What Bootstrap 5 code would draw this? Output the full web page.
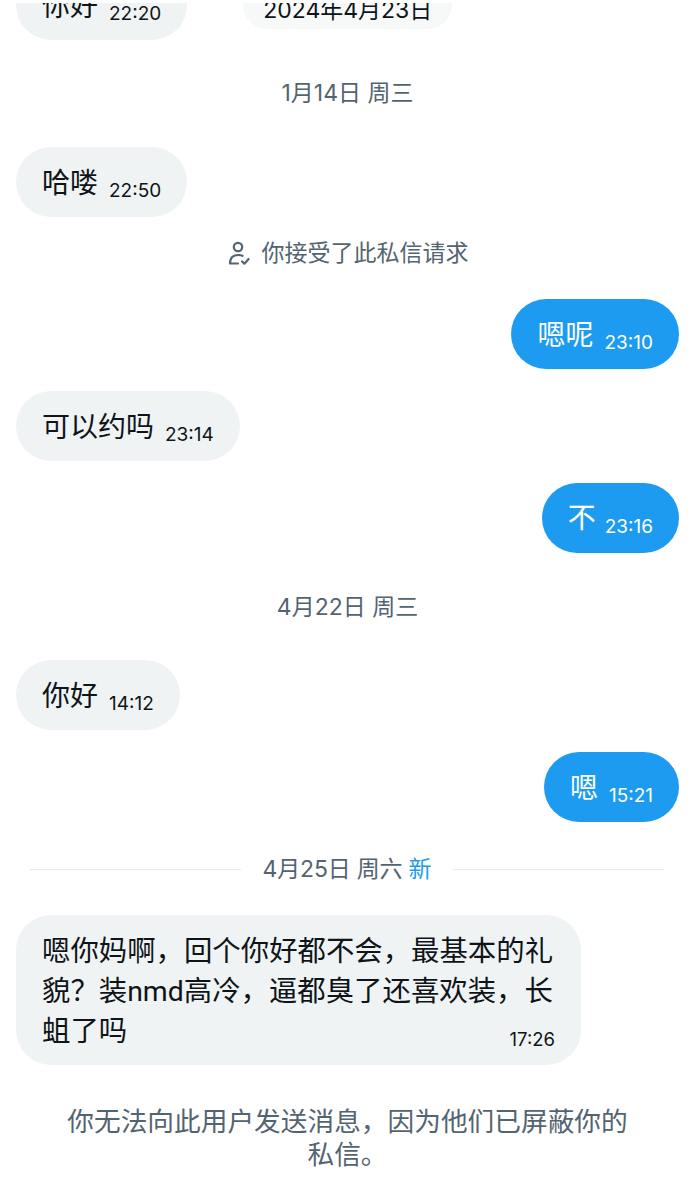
<!DOCTYPE html>
<html lang="zh">
<head>
<meta charset="utf-8">
<title>私信</title>
<link rel="stylesheet" href="https://cdn.jsdelivr.net/npm/bootstrap@5.3.0/dist/css/bootstrap.min.css">
<style>
html,body{height:1200px;overflow:hidden;background:#fff}
body{font-family:Inter,"Noto Sans CJK SC",sans-serif;color:#0f1419}
.clip-top{height:37px;margin-top:3px;overflow:hidden}
.clip-inner{margin-top:-33px;padding:0 16px}
.bub{height:70px;border-radius:35px;padding:0 26px;font-size:28px;line-height:40px;font-weight:400}
.bub-in{background:#eff3f4;color:#0f1419}
.bub-out{background:#1d9bf0;color:#fff}
.bub-txt{padding-top:2px}
.bub-time{font-size:19px;line-height:24px;margin-left:11px;transform:translateY(9px)}
.bub-time-tight{margin-left:9px}
.quote-bub{width:209px;height:70px;margin-left:56px;margin-top:-11px;background:#f7f9f9;border-radius:0 0 24px 24px;font-size:23px;line-height:28px;color:#0f1419}
.quote-txt{margin-top:37px}
.stream{padding:0 16px}
.day{font-size:23px;line-height:30px;color:#536471}
.day-a{margin-top:38px;margin-bottom:39px}
.day-b{margin-top:39px;margin-bottom:38px}
.gap-n{margin-top:22px}
.note{font-size:23px;line-height:30px;color:#536471;margin-top:21px;margin-bottom:31px}
.note-ico{width:24px;height:26px;margin-right:11px}
.rule-row{margin:32px 15px 31px 14px;height:30px;font-size:23px;line-height:30px;color:#536471}
.rule-line{height:1px;background:#e6eaec;flex:1 1 0}
.rule-txt{margin:0 22px;letter-spacing:-.2px}
.new-tag{color:#1d9bf0}
.bub-long{width:565px;height:150px;border-radius:35px;background:#eff3f4;padding:17px 26px 0;font-family:Roboto,"Noto Sans CJK SC",sans-serif;font-size:28.4px;line-height:40px}
.bub-long-time{font-family:Inter,sans-serif;font-size:18.5px;line-height:24px;margin-bottom:1px}
.foot{font-size:26.7px;line-height:33px;color:#536471;margin:40px 44px 0;text-align:center}
</style>
</head>
<body>
<div class="clip-top">
  <div class="clip-inner d-flex align-items-start">
    <div class="bub bub-in d-flex align-items-center"><span class="bub-txt">你好</span><span class="bub-time">22:20</span></div>
    <div class="quote-bub text-center"><div class="quote-txt">2024年4月23日</div></div>
  </div>
</div>
<div class="stream d-flex flex-column">
  <div class="day day-a text-center">1月14日 周三</div>
  <div class="bub bub-in align-self-start d-flex align-items-center"><span class="bub-txt">哈喽</span><span class="bub-time">22:50</span></div>
  <div class="note d-flex justify-content-center align-items-center">
    <svg class="note-ico" viewBox="0 0 24 26" fill="none" stroke="#536471" stroke-width="2.2" stroke-linecap="round" stroke-linejoin="round"><circle cx="11" cy="7" r="4.2"/><path d="M3 23.5c0-6 3.5-8.5 8.5-8.5 1.5 0 3 .3 4 .8M3 23.5h8"/><path d="M15 21.5l2.4 2.2 4.2-4.7"/></svg>
    <span>你接受了此私信请求</span>
  </div>
  <div class="bub bub-out align-self-end d-flex align-items-center"><span class="bub-txt">嗯呢</span><span class="bub-time">23:10</span></div>
  <div class="bub bub-in align-self-start gap-n d-flex align-items-center"><span class="bub-txt">可以约吗</span><span class="bub-time">23:14</span></div>
  <div class="bub bub-out align-self-end gap-n d-flex align-items-center"><span>不</span><span class="bub-time bub-time-tight">23:16</span></div>
  <div class="day day-b text-center">4月22日 周三</div>
  <div class="bub bub-in align-self-start d-flex align-items-center"><span class="bub-txt">你好</span><span class="bub-time">14:12</span></div>
  <div class="bub bub-out align-self-end gap-n d-flex align-items-center"><span class="bub-txt">嗯</span><span class="bub-time">15:21</span></div>
  <div class="rule-row d-flex align-items-center">
    <div class="rule-line"></div><div class="rule-txt">4月25日 周六 <span class="new-tag">新</span></div><div class="rule-line"></div>
  </div>
  <div class="bub-long align-self-start">
    <div>嗯你妈啊，回个你好都不会，最基本的礼貌？装nmd高冷，逼都臭了还喜欢装，长</div>
    <div class="d-flex justify-content-between align-items-end"><span>蛆了吗</span><span class="bub-long-time">17:26</span></div>
  </div>
  <div class="foot">你无法向此用户发送消息，因为他们已屏蔽你的私信。</div>
</div>
</body>
</html>
